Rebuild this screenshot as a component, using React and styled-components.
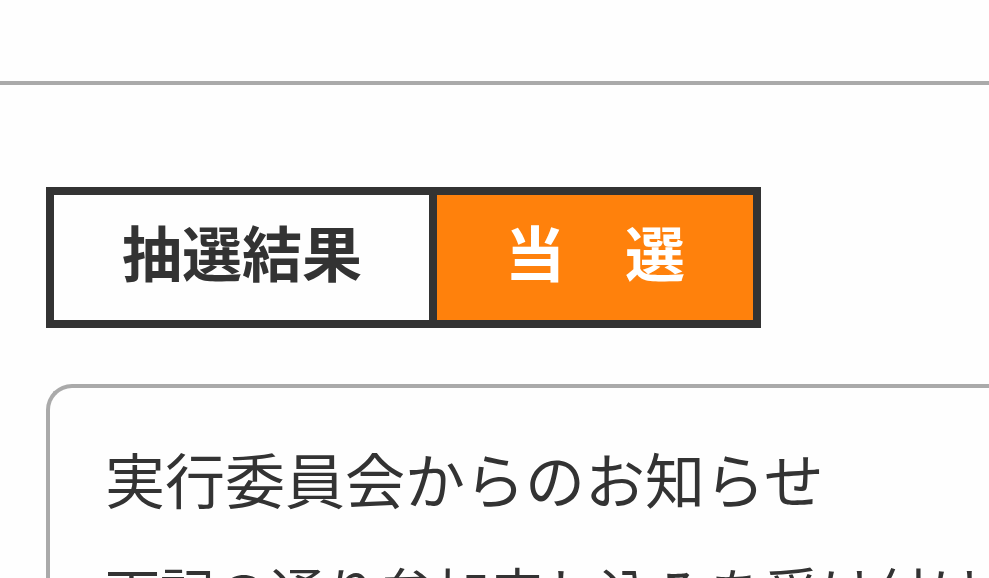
import React from 'react'
import styled, { createGlobalStyle } from 'styled-components'

const GlobalStyle = createGlobalStyle`
  * {
    box-sizing: border-box;
  }
  body {
    margin: 0;
    background: #fefefe;
    color: #333;
    font-family: "Noto Sans CJK JP", sans-serif;
  }
`;

const App = () => {
  return (
    <Page>
      <GlobalStyle />
      <Header />
      <Main>
        <Result>
          <Label>抽選結果</Label>
          <Status>当　選</Status>
        </Result>
        <Notice>
          <Title>実行委員会からのお知らせ</Title>
          <Body>下記の通り参加申し込みを受け付け</Body>
        </Notice>
      </Main>
    </Page>
  )
}

const Page = styled.div`
  display: flex;
  flex-direction: column;
  height: 100vh;
  overflow: hidden;
`;

const Header = styled.header`
  flex: none;
  height: 85px;
  border-bottom: 4px solid #aaa;
`;

const Main = styled.main`
  flex: 1;
  display: flex;
  flex-direction: column;
  align-items: flex-start;
  gap: 56px;
  min-height: 0;
  padding: 102px 0 0 46px;
`;

const Result = styled.dl`
  flex: none;
  display: flex;
  margin: 0;
  border: 8px solid #333;
  font-size: 60px;
  font-weight: 700;
  line-height: 88px;
`;

const Label = styled.dt`
  padding: 12px 67px 25px 68px;
`;

const Status = styled.dd`
  margin: 0;
  padding: 12px 68px 25px;
  border-left: 8px solid #333;
  background: #ff810c;
  color: #fff;
`;

/* the panel runs off the right and bottom edges */
const Notice = styled.section`
  flex: none;
  width: 100%;
  padding: 46px 0 46px 55px;
  border: 4px solid #aaa;
  border-width: 4px 0 0 4px;
  border-top-left-radius: 26px;
  white-space: nowrap;
`;

const Title = styled.h1`
  margin: 0 0 24px;
  font-size: 60px;
  font-weight: 400;
  line-height: 88px;
`;

const Body = styled.p`
  margin: 0;
  font-size: 55px;
  line-height: 88px;
`;

export default App
